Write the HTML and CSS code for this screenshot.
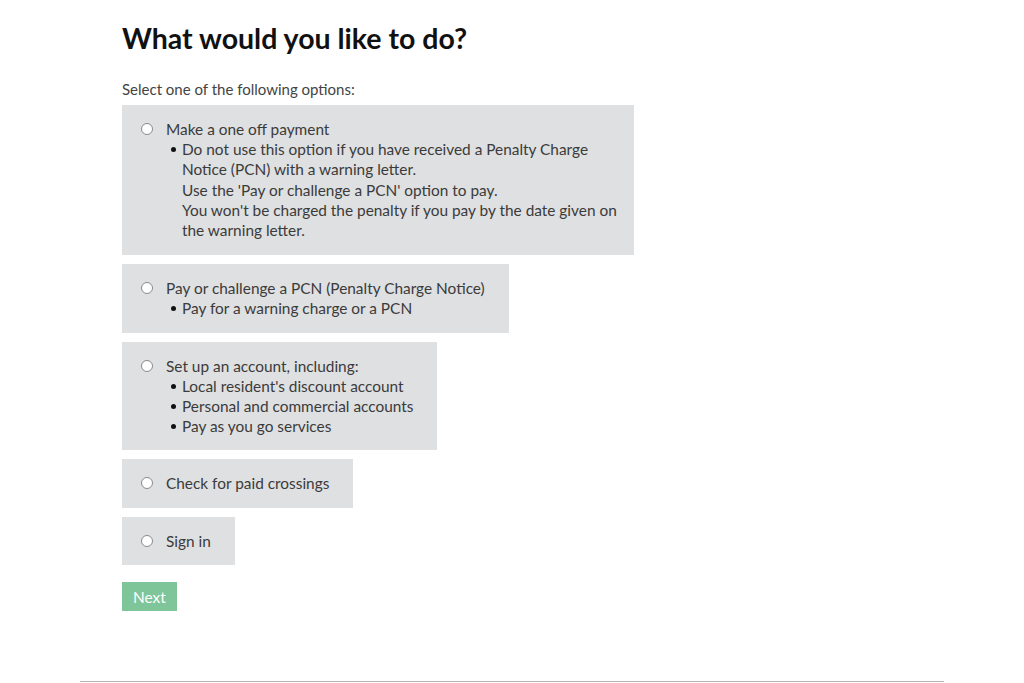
FILE: index.html
```html
<!DOCTYPE html>
<html lang="en">
<head>
<meta charset="utf-8">
<title>What would you like to do?</title>
<link rel="stylesheet" href="styles.css">
</head>
<body>
<main class="page">
  <h1 class="title">What would you like to do?</h1>
  <p class="hint">Select one of the following options:</p>
  <div class="options">
    <label class="option option-wide">
      <span class="radio"></span>
      <span class="body">
        <span class="label">Make a one off payment</span>
        <ul class="bullets">
          <li>Do not use this option if you have received a Penalty Charge Notice (PCN) with a warning letter.<br>Use the 'Pay or challenge a PCN' option to pay.<br>You won't be charged the penalty if you pay by the date given on the warning letter.</li>
        </ul>
      </span>
    </label>
    <label class="option">
      <span class="radio"></span>
      <span class="body">
        <span class="label">Pay or challenge a PCN (Penalty Charge Notice)</span>
        <ul class="bullets">
          <li>Pay for a warning charge or a PCN</li>
        </ul>
      </span>
    </label>
    <label class="option">
      <span class="radio"></span>
      <span class="body">
        <span class="label">Set up an account, including:</span>
        <ul class="bullets">
          <li>Local resident's discount account</li>
          <li>Personal and commercial accounts</li>
          <li>Pay as you go services</li>
        </ul>
      </span>
    </label>
    <label class="option">
      <span class="radio"></span>
      <span class="body"><span class="label">Check for paid crossings</span></span>
    </label>
    <label class="option">
      <span class="radio"></span>
      <span class="body"><span class="label">Sign in</span></span>
    </label>
  </div>
  <button class="next" type="button">Next</button>
</main>
<footer class="footer"></footer>
</body>
</html>
```

FILE: styles.css
```css
html, body {
  margin: 0;
  padding: 0;
  background: #ffffff;
}
body {
  font-family: Lato, "Open Sans", "Liberation Sans", sans-serif;
  color: #3b3b3b;
  width: 1024px;
  height: 683px;
  overflow: hidden;
  display: flex;
  flex-direction: column;
}
.page {
  padding: 0 0 0 122px;
  flex: 1;
  display: flex;
  flex-direction: column;
  align-items: flex-start;
}
.title {
  margin: 22px 0 0;
  font-size: 28.5px;
  line-height: 32px;
  font-weight: 700;
  color: #111;
}
.hint {
  margin: 25px 0 0;
  font-size: 15px;
  line-height: 20px;
  color: #444;
}
.options {
  margin-top: 6px;
  display: flex;
  flex-direction: column;
  align-items: flex-start;
  gap: 9px;
}
.option {
  display: flex;
  align-items: flex-start;
  background: #dfe0e1;
  padding: 14px 24px 14px 19px;
  font-size: 15.4px;
  line-height: 20.2px;
  color: #3b3b3b;
}
.option-wide {
  padding-bottom: 15px;
  padding-right: 10px;
}
.radio {
  width: 10px;
  height: 10px;
  border-radius: 50%;
  background: #fff;
  border: 1px solid #8a8a8a;
  margin: 4px 13px 0 0;
  flex: none;
}
.body {
  display: flex;
  flex-direction: column;
}
.label {
  display: block;
}
.bullets {
  margin: 0;
  padding: 0 0 0 16px;
  list-style: none;
}
.bullets li {
  position: relative;
}
.bullets li::before {
  content: "";
  position: absolute;
  left: -11px;
  top: 8px;
  width: 5px;
  height: 5px;
  border-radius: 50%;
  background: #111;
}
.option-wide .bullets li {
  width: 442px;
}
.next {
  margin-top: 17px;
  background: #7ec59a;
  color: #fff;
  border: none;
  font-family: inherit;
  font-size: 15.4px;
  line-height: 20px;
  padding: 5px 11px 4px;
  border-radius: 0;
}
.footer {
  margin: 0 80px 1px;
  border-top: 1px solid #b5b5b5;
  height: 0;
}
```
